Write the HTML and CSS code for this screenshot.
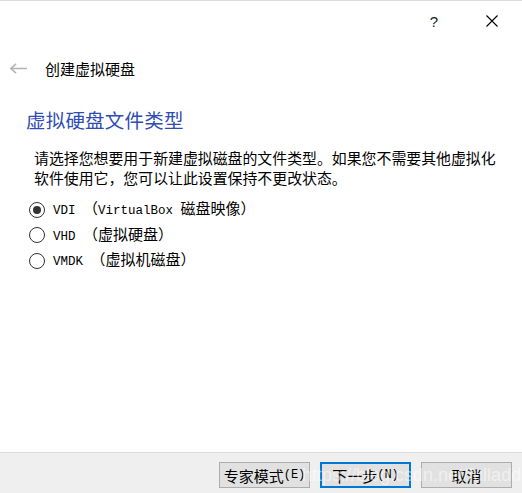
FILE: index.html
```html
<!DOCTYPE html>
<html lang="zh-CN">
<head>
<meta charset="utf-8">
<link rel="stylesheet" href="styles.css">
</head>
<body>
<div class="window">
  <div class="titlebar">
    <span class="help">?</span>
    <svg class="close" width="12" height="12" viewBox="0 0 12 12"><path d="M0.5 0.5 L11.5 11.5 M11.5 0.5 L0.5 11.5" stroke="#000" stroke-width="1.1" fill="none"/></svg>
  </div>
  <div class="nav">
    <svg class="back" width="17" height="11" viewBox="0 0 17 11"><path d="M1 5.5 H17 M6 0.8 L1 5.5 L6 10.2" stroke="#b4b4b4" stroke-width="1.6" fill="none"/></svg>
    <span class="navtitle">创建虚拟硬盘</span>
  </div>
  <div class="content">
    <h1 class="heading">虚拟硬盘文件类型</h1>
    <p class="desc">请选择您想要用于新建虚拟磁盘的文件类型。如果您不需要其他虚拟化软件使用它，您可以让此设置保持不更改状态。</p>
    <div class="options">
      <label class="option"><span class="radio checked"></span><span class="label"><span class="mono">VDI </span>（<span class="mono">VirtualBox </span>磁盘映像）</span></label>
      <label class="option"><span class="radio"></span><span class="label"><span class="mono">VHD </span>（虚拟硬盘）</span></label>
      <label class="option"><span class="radio"></span><span class="label"><span class="mono">VMDK </span>（虚拟机磁盘）</span></label>
    </div>
  </div>
  <div class="footer">
    <button class="btn">专家模式<span class="mono">(E)</span></button>
    <button class="btn primary">下一步<span class="mono">(N)</span></button>
    <button class="btn">取消</button>
    <span class="watermark">https://blog.csdn.net/fulladder</span>
  </div>
</div>
</body>
</html>
```

FILE: styles.css
```css
html, body {
  margin: 0;
  padding: 0;
  background: #fff;
}
.window {
  width: 522px;
  height: 493px;
  display: flex;
  flex-direction: column;
  box-sizing: border-box;
  border-top: 1px solid #dcdcdc;
  font-family: "Noto Sans CJK SC", "Liberation Sans", sans-serif;
  color: #000;
}
.titlebar {
  height: 39px;
  display: flex;
  align-items: center;
  justify-content: flex-end;
  padding-right: 24px;
}
.help {
  font-family: "Liberation Sans", sans-serif;
  font-size: 15px;
  color: #222;
  margin-right: 48px;
  line-height: 1;
  margin-top: 1px;
}
.close {
  display: block;
}
.nav {
  height: 56px;
  display: flex;
  align-items: center;
  padding-left: 10px;
}
.back {
  display: block;
  margin-right: 18px;
}
.navtitle {
  font-size: 15px;
  line-height: 1;
}
.content {
  padding: 11px 20px 0 26px;
}
.heading {
  margin: 0;
  font-weight: normal;
  font-size: 19.5px;
  line-height: 26px;
  color: #2f4db2;
  letter-spacing: 0.2px;
}
.desc {
  margin: 15px 0 0 8px;
  font-size: 14.9px;
  line-height: 20px;
  width: 470px;
}
.options {
  margin-top: 12px;
  display: flex;
  flex-direction: column;
  gap: 6.5px;
}
.option {
  display: flex;
  align-items: center;
  height: 19px;
  padding-left: 3px;
}
.radio {
  width: 14px;
  height: 14px;
  border: 1px solid #333;
  border-radius: 50%;
  box-sizing: content-box;
  margin-right: 8px;
  position: relative;
  flex: none;
}
.radio.checked::after {
  content: "";
  position: absolute;
  left: 3px;
  top: 3px;
  width: 8px;
  height: 8px;
  border-radius: 50%;
  background: #333;
}
.label {
  font-size: 15px;
  line-height: 19px;
}
.mono {
  font-family: "Liberation Mono", monospace;
  font-size: 12.5px;
}
.footer {
  margin-top: auto;
  height: 41px;
  box-sizing: border-box;
  border-top: 1px solid #dcdcdc;
  background: #efefef;
  display: flex;
  align-items: flex-start;
  justify-content: flex-end;
  gap: 10px;
  padding: 9px 10px 0 0;
  position: relative;
}
.btn {
  width: 91px;
  height: 26px;
  box-sizing: border-box;
  background: #e1e1e1;
  border: 1px solid #adadad;
  font-family: "Noto Sans CJK SC", sans-serif;
  font-size: 15px;
  color: #000;
  padding: 0;
  display: flex;
  align-items: center;
  justify-content: center;
  line-height: 1;
  white-space: nowrap;
}
.btn .mono {
  font-size: 12px;
}
.btn.primary {
  border: 2px solid #0078d7;
}
.watermark {
  position: absolute;
  left: 302px;
  top: 12px;
  font-family: "Liberation Sans", sans-serif;
  font-size: 18px;
  color: rgba(255, 255, 255, 0.5);
  pointer-events: none;
  white-space: nowrap;
}
```
